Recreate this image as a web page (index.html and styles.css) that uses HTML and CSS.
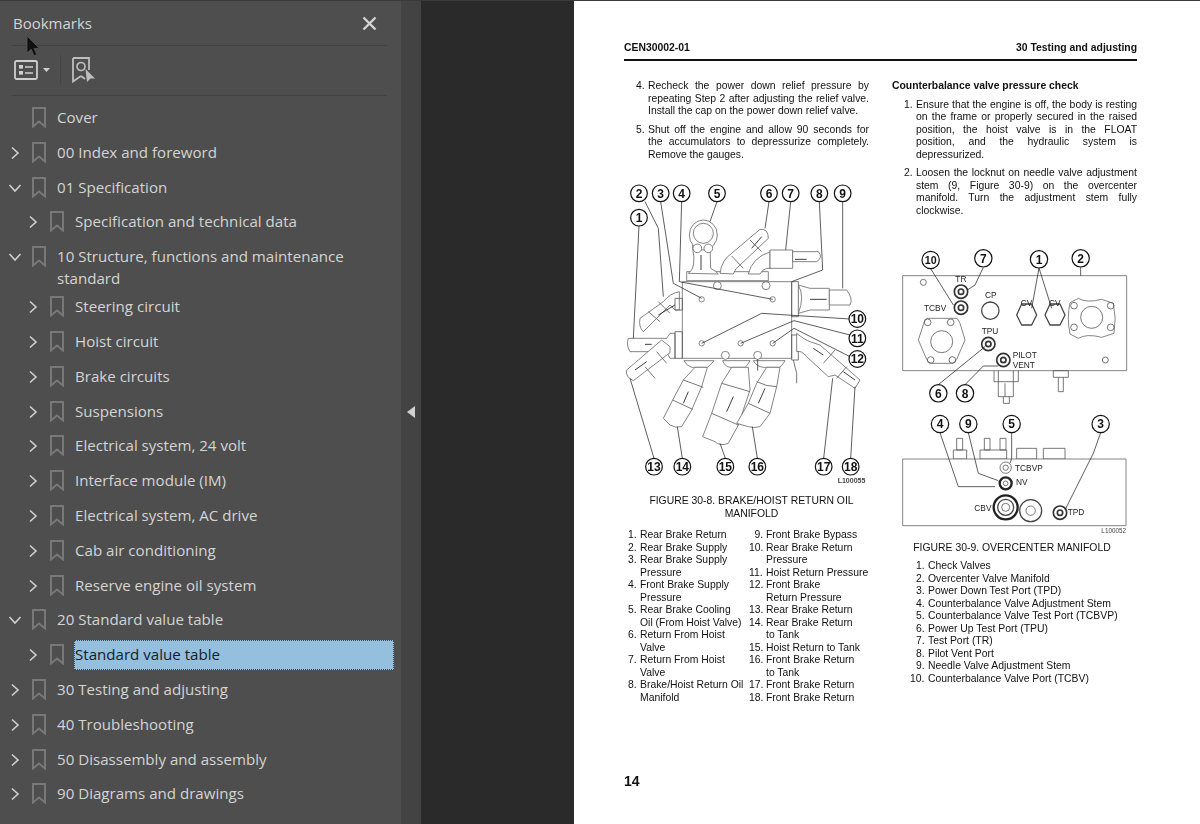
FILE: index.html
```html
<!DOCTYPE html>
<html lang="en">
<head>
<meta charset="utf-8">
<title>Bookmarks</title>
<link rel="stylesheet" href="styles.css">
</head>
<body>
<svg width="0" height="0" class="defs">
  <defs>
    <symbol id="bm" viewBox="0 0 14 21"><path d="M1 1H13V19.5L7 14.5L1 19.5Z" fill="none" stroke="#787878" stroke-width="2"/></symbol>
    <symbol id="cr" viewBox="0 0 14 14"><path d="M4 1.5L10 7L4 12.5" fill="none" stroke="#d0d0d0" stroke-width="1.6"/></symbol>
    <symbol id="cd" viewBox="0 0 14 14"><path d="M1.5 4L7 10L12.5 4" fill="none" stroke="#d0d0d0" stroke-width="1.6"/></symbol>
  </defs>
</svg>
<div class="app">
  <aside class="panel">
    <header class="panel-head">
      <h1 class="panel-title">Bookmarks</h1>
      <svg class="close" width="15" height="15" viewBox="0 0 15 15"><path d="M1.5 1.5L13.5 13.5M13.5 1.5L1.5 13.5" stroke="#d4d4d4" stroke-width="2.4"/></svg>
    </header>
    <div class="toolbar">
      <svg width="24" height="20" viewBox="0 0 24 20"><rect x="1" y="1" width="22" height="18" rx="1.5" fill="none" stroke="#cfcfcf" stroke-width="1.8"/><rect x="5" y="5" width="4" height="3.6" fill="#cfcfcf"/><rect x="5" y="11" width="4" height="3.6" fill="#cfcfcf"/><path d="M11 7H19M11 13H19" stroke="#cfcfcf" stroke-width="1.6"/></svg>
      <svg class="caret" width="7" height="4" viewBox="0 0 7 4"><path d="M0 0H7L3.5 4Z" fill="#cfcfcf"/></svg>
      <span class="tool-sep"></span>
      <svg width="24" height="26" viewBox="0 0 24 26"><path d="M1 1H17V13M9 19L1 24.5V1M9 19L13 22" fill="none" stroke="#bdbdbd" stroke-width="1.8"/><circle cx="9" cy="9.5" r="4" fill="none" stroke="#bdbdbd" stroke-width="1.7"/><path d="M13.5 12L23 21.5H18.5L15 25Z" fill="#bdbdbd"/></svg>
    </div>
    <ul class="tree">
      <li class="row"><span class="tw"></span><svg class="bm"><use href="#bm"/></svg><span class="lbl">Cover</span></li>
      <li class="row"><svg class="tw"><use href="#cr"/></svg><svg class="bm"><use href="#bm"/></svg><span class="lbl">00 Index and foreword</span></li>
      <li class="row"><svg class="tw"><use href="#cd"/></svg><svg class="bm"><use href="#bm"/></svg><span class="lbl">01 Specification</span></li>
      <li class="row sub"><svg class="tw"><use href="#cr"/></svg><svg class="bm"><use href="#bm"/></svg><span class="lbl">Specification and technical data</span></li>
      <li class="row wrap"><svg class="tw"><use href="#cd"/></svg><svg class="bm"><use href="#bm"/></svg><span class="lbl">10 Structure, functions and maintenance standard</span></li>
      <li class="row sub"><svg class="tw"><use href="#cr"/></svg><svg class="bm"><use href="#bm"/></svg><span class="lbl">Steering circuit</span></li>
      <li class="row sub"><svg class="tw"><use href="#cr"/></svg><svg class="bm"><use href="#bm"/></svg><span class="lbl">Hoist circuit</span></li>
      <li class="row sub"><svg class="tw"><use href="#cr"/></svg><svg class="bm"><use href="#bm"/></svg><span class="lbl">Brake circuits</span></li>
      <li class="row sub"><svg class="tw"><use href="#cr"/></svg><svg class="bm"><use href="#bm"/></svg><span class="lbl">Suspensions</span></li>
      <li class="row sub"><svg class="tw"><use href="#cr"/></svg><svg class="bm"><use href="#bm"/></svg><span class="lbl">Electrical system, 24 volt</span></li>
      <li class="row sub"><svg class="tw"><use href="#cr"/></svg><svg class="bm"><use href="#bm"/></svg><span class="lbl">Interface module (IM)</span></li>
      <li class="row sub"><svg class="tw"><use href="#cr"/></svg><svg class="bm"><use href="#bm"/></svg><span class="lbl">Electrical system, AC drive</span></li>
      <li class="row sub"><svg class="tw"><use href="#cr"/></svg><svg class="bm"><use href="#bm"/></svg><span class="lbl">Cab air conditioning</span></li>
      <li class="row sub"><svg class="tw"><use href="#cr"/></svg><svg class="bm"><use href="#bm"/></svg><span class="lbl">Reserve engine oil system</span></li>
      <li class="row"><svg class="tw"><use href="#cd"/></svg><svg class="bm"><use href="#bm"/></svg><span class="lbl">20 Standard value table</span></li>
      <li class="row sub selected"><svg class="tw"><use href="#cr"/></svg><svg class="bm"><use href="#bm"/></svg><span class="lbl">Standard value table</span></li>
      <li class="row"><svg class="tw"><use href="#cr"/></svg><svg class="bm"><use href="#bm"/></svg><span class="lbl">30 Testing and adjusting</span></li>
      <li class="row"><svg class="tw"><use href="#cr"/></svg><svg class="bm"><use href="#bm"/></svg><span class="lbl">40 Troubleshooting</span></li>
      <li class="row"><svg class="tw"><use href="#cr"/></svg><svg class="bm"><use href="#bm"/></svg><span class="lbl">50 Disassembly and assembly</span></li>
      <li class="row"><svg class="tw"><use href="#cr"/></svg><svg class="bm"><use href="#bm"/></svg><span class="lbl">90 Diagrams and drawings</span></li>
    </ul>
    <svg class="cursor" width="14" height="22" viewBox="0 0 14 22"><path d="M1 1V18L5.2 14.2L8 20.8L10.8 19.6L8 13.4H13.4Z" fill="#111" stroke="#555" stroke-width=".8"/></svg>
  </aside>
  <div class="splitter"><svg width="8" height="12" viewBox="0 0 8 12"><path d="M8 0V12L0 6Z" fill="#d2d2d2"/></svg></div>
  <main class="viewer">
    <article class="page">
      <header class="page-head"><span>CEN30002-01</span><span>30 Testing and adjusting</span></header>
      <div class="cols">
        <section class="col">
          <ol class="steps" start="4">
            <li><span class="n">4.</span><p>Recheck the power down relief pressure by repeating Step 2 after adjusting the relief valve. Install the cap on the power down relief valve.</p></li>
            <li><span class="n">5.</span><p>Shut off the engine and allow 90 seconds for the accumulators to depressurize completely. Remove the gauges.</p></li>
          </ol>
          <svg class="fig1" width="260" height="320" viewBox="0 0 780 960">
            <g class="ln">
              <path class="hose" d="M25 505H140L150 490H165V565H150L140 545H30Q18 525 25 505Z"/>
              <path class="hose" d="M40 632Q15 620 20 600L125 510L150 530L150 548Z"/>
              <path class="hose" d="M70 485Q55 470 60 445L130 395Q150 370 178 365V420H165L150 405Z"/>
              <path d="M85 425L120 455M115 395L150 430"/>
              <path d="M75 590L105 625M110 545L140 580"/>
              <path class="hose" d="M187 335H515V565H187Z"/>
              <path d="M165 485H187V565H165ZM515 335H535V440H515ZM515 495H535V570H515ZM165 385H187V420H165Z"/>
              <path class="hose" d="M535 345Q555 380 535 430L570 420H628V355H570Z"/>
              <path class="hose" d="M628 360H680Q700 385 690 405H628Z"/>
              <path class="hose" d="M530 490Q555 510 570 515L600 525L640 560L720 630L705 655L645 615L625 620L560 560Q545 540 530 545Z"/>
              <path d="M610 580L645 540M650 625L680 590"/>
              <path class="hose" d="M200 305H445V332H200Z"/>
              <path class="hose" d="M205 310Q230 295 218 235V225H270L272 295Q290 305 295 312Z"/>
              <ellipse class="hose" cx="250" cy="195" rx="42" ry="45"/>
              <circle class="hose" cx="250" cy="190" r="30"/>
              <circle class="hose" cx="232" cy="235" r="13"/><circle class="hose" cx="265" cy="235" r="13"/>
              <path class="hose" d="M300 310Q305 270 335 250L420 178Q445 175 445 205L360 285Q345 295 340 312Z"/>
              <path d="M335 258L370 295M390 210L425 245"/>
              <path class="hose" d="M385 312Q395 265 450 245V295H440Q425 300 420 312Z"/>
              <path class="hose" d="M450 240H518V295H450Z"/>
              <path class="hose" d="M518 245H595Q610 262 590 275H518Z"/>
              <circle class="hose" cx="292" cy="347" r="12"/><circle class="hose" cx="438" cy="347" r="12"/>
              <path class="hose" d="M192 572H282Q270 588 262 592H215Q200 588 192 572Z"/>
              <path class="hose" d="M225 592H262L245 650L215 720L185 770Q165 775 150 765L130 745L158 690L190 630Z"/>
              <path d="M190 630L250 652M158 690L218 718"/>
              <path class="hose" d="M308 572H390Q380 590 375 592H330Q315 590 308 572Z"/>
              <path class="hose" d="M335 592H385L390 660L355 765L325 820Q300 830 285 815L248 800L275 730L305 640Z"/>
              <path d="M305 640L390 665M275 730L355 765"/>
              <path class="hose" d="M400 572H495Q485 590 478 592H430Q410 590 400 572Z"/>
              <path class="hose" d="M440 592H480L470 650L450 730L420 770Q400 775 385 770L350 760L385 700L410 640Z"/>
              <path d="M410 635Q440 650 470 650M385 700L450 730"/>
              <circle class="hose" cx="316" cy="556" r="12"/><circle class="hose" cx="413" cy="556" r="12"/>
              <circle class="hose" cx="245" cy="388" r="8"/><circle class="hose" cx="458" cy="388" r="8"/>
              <circle class="hose" cx="245" cy="520" r="8"/><circle class="hose" cx="362" cy="520" r="8"/><circle class="hose" cx="458" cy="520" r="8"/>
              <path d="M520 570L530 610V640"/>
            </g>
            <g class="arrows">
              <path d="M243 255V300M425 200L395 235M560 268H525M620 388H570M75 523H95M45 600L80 575M165 405L115 435M205 665L190 700M340 680L320 725M435 655L415 700M580 535L610 555M670 605L705 630"/>
            </g>
            <g class="lead">
              <path d="M57 168L40 505M75 95L115 175L130 380M122 95L160 340L245 385M185 95L178 335L458 388M291 95L270 155M447 95L435 175M512 95L497 240M598 95L608 300L515 335M668 95V355M690 447L425 430L245 520M690 495L522 452L362 520M690 560L522 475L458 520M102 865L30 625M187 865L172 770M316 865L300 820M412 865L397 770M611 865L638 625M692 865L705 650M413 568V602"/>
            </g>
            <g class="nums">
              <g><circle cx="57" cy="143" r="25"/><text x="57" y="156">1</text></g>
              <g><circle cx="57" cy="70" r="25"/><text x="57" y="83">2</text></g>
              <g><circle cx="122" cy="70" r="25"/><text x="122" y="83">3</text></g>
              <g><circle cx="185" cy="70" r="25"/><text x="185" y="83">4</text></g>
              <g><circle cx="291" cy="70" r="25"/><text x="291" y="83">5</text></g>
              <g><circle cx="447" cy="70" r="25"/><text x="447" y="83">6</text></g>
              <g><circle cx="512" cy="70" r="25"/><text x="512" y="83">7</text></g>
              <g><circle cx="598" cy="70" r="25"/><text x="598" y="83">8</text></g>
              <g><circle cx="668" cy="70" r="25"/><text x="668" y="83">9</text></g>
              <g><circle cx="712" cy="447" r="25"/><text x="712" y="460">10</text></g>
              <g><circle cx="712" cy="505" r="25"/><text x="712" y="518">11</text></g>
              <g><circle cx="712" cy="567" r="25"/><text x="712" y="580">12</text></g>
              <g><circle cx="102" cy="890" r="25"/><text x="102" y="903">13</text></g>
              <g><circle cx="187" cy="890" r="25"/><text x="187" y="903">14</text></g>
              <g><circle cx="316" cy="890" r="25"/><text x="316" y="903">15</text></g>
              <g><circle cx="412" cy="890" r="25"/><text x="412" y="903">16</text></g>
              <g><circle cx="611" cy="890" r="25"/><text x="611" y="903">17</text></g>
              <g><circle cx="692" cy="890" r="25"/><text x="692" y="903">18</text></g>
            </g>
            <text class="code" x="736" y="939">L100055</text>
          </svg>
          <h2 class="caption cap1">FIGURE 30-8. BRAKE/HOIST RETURN OIL<br>MANIFOLD</h2>
          <div class="legend">
            <ol class="leg">
              <li><span>1.</span>Rear Brake Return</li>
              <li><span>2.</span>Rear Brake Supply</li>
              <li><span>3.</span>Rear Brake Supply<br>Pressure</li>
              <li><span>4.</span>Front Brake Supply<br>Pressure</li>
              <li><span>5.</span>Rear Brake Cooling<br>Oil (From Hoist Valve)</li>
              <li><span>6.</span>Return From Hoist<br>Valve</li>
              <li><span>7.</span>Return From Hoist<br>Valve</li>
              <li><span>8.</span>Brake/Hoist Return Oil<br>Manifold</li>
            </ol>
            <ol class="leg leg2">
              <li><span>9.</span>Front Brake Bypass</li>
              <li><span>10.</span>Rear Brake Return<br>Pressure</li>
              <li><span>11.</span>Hoist Return Pressure</li>
              <li><span>12.</span>Front Brake<br>Return Pressure</li>
              <li><span>13.</span>Rear Brake Return</li>
              <li><span>14.</span>Rear Brake Return<br>to Tank</li>
              <li><span>15.</span>Hoist Return to Tank</li>
              <li><span>16.</span>Front Brake Return<br>to Tank</li>
              <li><span>17.</span>Front Brake Return</li>
              <li><span>18.</span>Front Brake Return</li>
            </ol>
          </div>
        </section>
        <section class="col">
          <h3 class="sect">Counterbalance valve pressure check</h3>
          <ol class="steps">
            <li><span class="n">1.</span><p>Ensure that the engine is off, the body is resting on the frame or properly secured in the raised position, the hoist valve is in the FLOAT position, and the hydraulic system is depressurized.</p></li>
            <li><span class="n">2.</span><p>Loosen the locknut on needle valve adjustment stem (9, Figure 30-9) on the overcenter manifold. Turn the adjustment stem fully clockwise.</p></li>
          </ol>
          <svg class="fig2" width="250" height="300" viewBox="0 0 750 900">
            <g class="ln">
              <path class="hose" d="M38 107H710V392H38Z"/>
              <circle cx="100" cy="127" r="9"/><circle cx="646" cy="360" r="9"/>
              <path class="hose" d="M112 235H198Q205 235 210 250L225 300L200 358Q195 370 185 370H125Q115 370 110 358L85 300L102 248Q105 235 112 235Z"/>
              <circle cx="155" cy="305" r="33"/><circle cx="113" cy="247" r="10"/><circle cx="182" cy="247" r="10"/><circle cx="122" cy="360" r="10"/><circle cx="187" cy="360" r="10"/>
              <path class="hose" d="M565 175Q590 190 635 178L670 190Q680 235 672 280L635 292Q590 280 565 295L540 282Q530 235 540 188Z"/>
              <circle cx="605" cy="232" r="33"/><circle cx="552" cy="197" r="10"/><circle cx="662" cy="197" r="10"/><circle cx="552" cy="262" r="10"/><circle cx="662" cy="262" r="10"/>
              <circle class="thick" cx="301" cy="212" r="26"/>
              <path class="thick" d="M395 192H425L440 225L425 255H395L380 225Z"/>
              <path class="thick" d="M480 192H510L525 225L510 255H480L465 225Z"/>
              <g class="nut"><circle cx="213" cy="155" r="20"/><circle cx="213" cy="155" r="8"/></g>
              <g class="nut"><circle cx="213" cy="203" r="20"/><circle cx="213" cy="203" r="8"/></g>
              <g class="nut"><circle cx="295" cy="312" r="20"/><circle cx="295" cy="312" r="8"/></g>
              <g class="nut"><circle cx="340" cy="360" r="20"/><circle cx="340" cy="360" r="8"/></g>
              <path d="M312 392V425H385V392M325 392V470H370V392M340 470V490H358V470M345 430V470M490 392H535V412H490ZM505 412V455H520V412"/>
              <path d="M190 630H230V657H190ZM200 595H218V630H200ZM270 630H350V657H270ZM283 595H300V630H283ZM330 595H348V630H330ZM380 625H440V657H380ZM460 625H525V657H460Z"/>
              <path class="hose" d="M38 657H708V857H38Z"/>
              <circle cx="347" cy="683" r="17"/><circle cx="347" cy="683" r="8"/>
              <circle class="heavy" cx="347" cy="730" r="18"/><circle cx="347" cy="730" r="7"/>
              <circle class="heavy" cx="347" cy="802" r="36"/><circle class="thick" cx="347" cy="802" r="24"/><circle cx="347" cy="802" r="12"/>
              <circle class="thick" cx="422" cy="812" r="33"/><circle cx="422" cy="812" r="14"/>
              <g class="nut"><circle cx="510" cy="818" r="20"/><circle cx="510" cy="818" r="8"/></g>
            </g>
            <g class="lead">
              <path d="M122 86L190 195M280 82L255 135L232 150M447 84L425 205M447 84L485 205M572 82V107M145 434L285 320M225 434L280 378H325M150 578L205 740H315M235 578L265 700L325 722M365 578V655L360 670M632 578L610 640L525 810"/>
            </g>
            <g class="nums">
              <g><circle cx="122" cy="60" r="26"/><text class="two" x="122" y="71">10</text></g>
              <g><circle cx="280" cy="55" r="26"/><text x="280" y="68">7</text></g>
              <g><circle cx="447" cy="58" r="26"/><text x="447" y="71">1</text></g>
              <g><circle cx="572" cy="55" r="26"/><text x="572" y="68">2</text></g>
              <g><circle cx="145" cy="460" r="26"/><text x="145" y="473">6</text></g>
              <g><circle cx="225" cy="460" r="26"/><text x="225" y="473">8</text></g>
              <g><circle cx="150" cy="552" r="26"/><text x="150" y="565">4</text></g>
              <g><circle cx="235" cy="552" r="26"/><text x="235" y="565">9</text></g>
              <g><circle cx="365" cy="552" r="26"/><text x="365" y="565">5</text></g>
              <g><circle cx="632" cy="552" r="26"/><text x="632" y="565">3</text></g>
            </g>
            <g class="tags">
              <text x="196" y="127">TR</text><text x="102" y="212">TCBV</text><text x="285" y="175">CP</text><text x="392" y="197">CV</text><text x="477" y="197">CV</text><text x="275" y="283">TPU</text><text x="368" y="355">PILOT</text><text x="368" y="385">VENT</text><text x="375" y="692">TCBVP</text><text x="378" y="735">NV</text><text x="253" y="813">CBV</text><text x="533" y="825">TPD</text>
            </g>
            <text class="code small" x="708" y="878">L100052</text>
          </svg>
          <h2 class="caption cap2">FIGURE 30-9. OVERCENTER MANIFOLD</h2>
          <ol class="list2">
            <li><span>1.</span>Check Valves</li>
            <li><span>2.</span>Overcenter Valve Manifold</li>
            <li><span>3.</span>Power Down Test Port (TPD)</li>
            <li><span>4.</span>Counterbalance Valve Adjustment Stem</li>
            <li><span>5.</span>Counterbalance Valve Test Port (TCBVP)</li>
            <li><span>6.</span>Power Up Test Port (TPU)</li>
            <li><span>7.</span>Test Port (TR)</li>
            <li><span>8.</span>Pilot Vent Port</li>
            <li><span>9.</span>Needle Valve Adjustment Stem</li>
            <li><span>10.</span>Counterbalance Valve Port (TCBV)</li>
          </ol>
        </section>
      </div>
      <footer class="page-num">14</footer>
    </article>
  </main>
</div>
</body>
</html>
```
FILE: styles.css
```css
*{box-sizing:border-box}
html,body{margin:0;height:100%;overflow:hidden}
body{font-family:"Liberation Sans",Arial,sans-serif;background:#2a2a2a}
.defs{position:absolute}
ul,ol{list-style:none;margin:0;padding:0}
.app{display:flex;height:824px;border-top:1px solid #3a3a3a}
.panel{position:relative;width:401px;flex:none;background:#4e4e4e;color:#d4d4d4;font-family:"Open Sans","Noto Sans",sans-serif;padding:0 7px 0 0;overflow:hidden}
.panel-head{display:flex;justify-content:space-between;align-items:center;height:45px;margin-left:12px;padding:2px 10px 2px 1px;border-bottom:1px solid #414141;width:375px}
.panel-title{margin:0;font-size:15px;font-weight:400;color:#d4d4d4}
.toolbar{display:flex;align-items:center;height:50px;margin-left:12px;width:375px;padding:0 0 2px 2px;border-bottom:1px solid #414141}
.caret{margin:0 0 0 5px}
.tool-sep{width:1px;height:30px;background:#444;margin:0 11px 0 10px}
.tree{padding-top:4.5px}
.row{display:flex;align-items:flex-start;padding:6.55px 0;line-height:21.7px;font-size:15.1px}
.row.wrap{padding-bottom:0}
.tw{width:14px;height:14px;margin:4px 10px 0 8px;flex:none}
.bm{width:14px;height:21px;margin:0 11px 0 0;flex:none}
.lbl{flex:1;min-width:0;margin-right:32px}
.row.sub{padding-left:18px}
.row.selected .lbl{background:#94bfdd;color:#161c28;outline:1px dotted #3a4a55;outline-offset:-1px;margin:-4px 0 -4px -1px;padding:4px 1px}
.cursor{position:absolute;left:26px;top:34px}
.splitter{width:20px;flex:none;background:#434343;display:flex;align-items:center;justify-content:center;padding-right:1px;padding-bottom:1px}
.viewer{flex:1;min-width:0;display:flex;justify-content:flex-end}
.page{display:flex;flex-direction:column;width:626px;height:100%;background:#fff;padding:41px 63px 35px 50px;color:#111;font-size:10.4px;line-height:12.5px;filter:blur(.35px)}
.page-head{display:flex;justify-content:space-between;font-weight:700;font-size:10.4px;padding-bottom:2px;border-bottom:2px solid #111;height:19px;line-height:12px;flex:none}
.cols{display:grid;grid-template-columns:245px 245px;column-gap:23px;margin-top:19px;flex:none}
.col{min-width:0}
.steps li{display:flex;margin-bottom:6px}
.n{width:24px;flex:none;padding-left:12px}
.steps p{margin:0;flex:1;text-align:justify}
.sect{margin:0 0 6px;font-size:10.4px;line-height:12.5px;font-weight:700}
.fig1{display:block;margin:8.5px 0 0 -4px}
.fig2{display:block;margin:22.5px 0 0 -2px}
.ln path,.ln circle,.ln ellipse{fill:none;stroke:#555;stroke-width:2.4;stroke-linejoin:round}
.ln .hose{fill:#fff;stroke:#666}
.ln .thick{stroke:#444;stroke-width:3.8}
.ln .heavy{stroke:#222;stroke-width:7}
.ln .nut circle{stroke:#333;stroke-width:5}
.arrows path{stroke:#222;stroke-width:2.6;fill:none}
.lead path{fill:none;stroke:#222;stroke-width:2.2}
.nums circle{fill:#fff;stroke:#111;stroke-width:3.6}
.nums text{font-size:36px;font-weight:700;text-anchor:middle;fill:#111;font-family:"Liberation Sans Narrow","Liberation Sans",sans-serif}
.nums text.two{font-size:32px}
.tags text{font-size:25px;fill:#222}
.code{font-size:21px;font-weight:700;text-anchor:end;fill:#444}
.code.small{font-size:19px;font-weight:400}
.caption{margin:0;font-size:10.4px;line-height:12.5px;font-weight:400;text-align:center}
.cap1{padding-left:10px;margin-top:5.5px}
.cap2{margin-top:2px;padding-right:5px}
.legend{display:grid;grid-template-columns:116px 125px;margin-top:9px;padding-left:4px;white-space:nowrap}
.leg li{padding-left:12px;position:relative}
.leg li span{position:absolute;left:0}
.leg2{padding-left:5px}
.leg2 li{padding-left:17px}
.leg2 li:first-child span{left:5.5px}
.list2{margin-top:6px;padding-left:24px}
.list2 li span{display:inline-block;width:12px}
.list2 li:last-child span{margin-left:-6px;width:18px}
.page-num{margin-top:auto;font-size:14px;font-weight:700;line-height:16px;color:#111}
```
